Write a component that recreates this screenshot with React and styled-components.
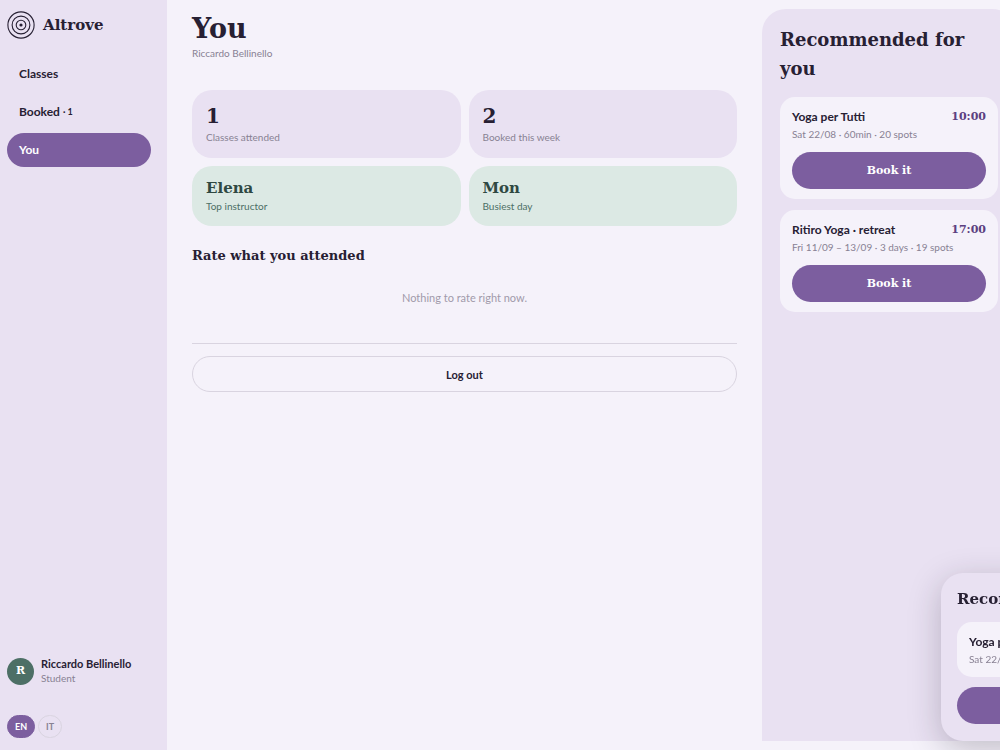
import React from "react";
import styled, { createGlobalStyle, ThemeProvider } from "styled-components";

const theme = {
  paper: "#f5f2fa",
  lilac: "#e9e1f2",
  purple: "#7c5e9f",
  violet: "#5b4080",
  ink: "#272033",
  muted: "#888193",
  line: "#d9d4e0",
  mint: "#dce9e4",
  green: "#4d6f66",
  forest: "#2f4842",
  display: '"DejaVu Serif", serif',
};

const GlobalStyle = createGlobalStyle`
  *, *::before, *::after { box-sizing: border-box; }
  body {
    margin: 0;
    overflow: hidden;
    background: ${theme.paper};
    color: ${theme.ink};
    font-family: Lato, sans-serif;
    font-size: 12px;
    line-height: 16px;
  }
  h1, h2, h3, p { margin: 0; }
  button { font-family: inherit; cursor: pointer; }
`;

const Shell = styled.div`
  display: grid;
  grid-template-columns: 167px minmax(0, 1fr) 238px;
  height: 100vh;
`;

const Sidebar = styled.aside`
  display: flex;
  flex-direction: column;
  padding: 11px 16px 12px 7px;
  background: ${(p) => p.theme.lilac};
`;

const Brand = styled.a`
  display: flex;
  align-items: center;
  gap: 8px;
  color: inherit;
  text-decoration: none;
  font: 700 15px/28px ${(p) => p.theme.display};
`;

const Nav = styled.nav`
  display: flex;
  flex-direction: column;
  gap: 4px;
  margin-top: 18px;
`;

const NavLink = styled.a`
  display: flex;
  align-items: center;
  gap: 3px;
  height: 34px;
  padding: 0 12px;
  border-radius: 17px;
  background: ${(p) => (p.$active ? p.theme.purple : "transparent")};
  color: ${(p) => (p.$active ? "#fff" : p.theme.ink)};
  font-size: 12px;
  font-weight: 700;
  text-decoration: none;
`;

const Count = styled.span`
  font-size: 9px;
`;

const Profile = styled.div`
  display: flex;
  align-items: center;
  gap: 7px;
  margin-top: auto;
`;

const Avatar = styled.span`
  display: grid;
  place-items: center;
  flex: none;
  width: 27px;
  height: 27px;
  border-radius: 50%;
  background: ${(p) => p.theme.green};
  color: #fff;
  font: 700 11px/16px ${(p) => p.theme.display};
`;

const ProfileName = styled.p`
  font-size: 11px;
  font-weight: 700;
  line-height: 15px;
  white-space: nowrap;
`;

const Caption = styled.p`
  color: ${(p) => (p.$green ? p.theme.green : p.theme.muted)};
  font-size: 10px;
  line-height: 15px;
`;

const Languages = styled.div`
  display: flex;
  gap: 3px;
  margin-top: 29px;
`;

const Language = styled.button`
  height: 23px;
  padding: 0 7px;
  border: 1px solid ${(p) => (p.$active ? p.theme.purple : p.theme.line)};
  border-radius: 12px;
  background: ${(p) => (p.$active ? p.theme.purple : "transparent")};
  color: ${(p) => (p.$active ? "#fff" : p.theme.muted)};
  font-size: 9px;
  font-weight: 700;
`;

const Main = styled.main`
  padding: 11px 25px;
`;

const PageTitle = styled.h1`
  font: 700 27px/35px ${(p) => p.theme.display};
`;

const Stats = styled.dl`
  display: grid;
  grid-template-columns: 1fr 1fr;
  gap: 8px;
  margin: 29px 0 0;
`;

const Stat = styled.div`
  display: flex;
  flex-direction: column;
  padding: ${(p) => (p.$green ? "12px 14px" : "13px 14px")};
  height: ${(p) => (p.$green ? "60px" : "68px")};
  border-radius: 20px;
  background: ${(p) => (p.$green ? p.theme.mint : p.theme.lilac)};
`;

const StatValue = styled.dd`
  order: -1;
  margin: 0;
  color: ${(p) => (p.$green ? p.theme.forest : p.theme.ink)};
  font: 700 ${(p) => (p.$green ? "15px/21px" : "20px/27px")} ${(p) => p.theme.display};
`;

const SectionTitle = styled.h2`
  margin-top: 20px;
  font: 700 13px/20px ${(p) => p.theme.display};
`;

const Empty = styled.p`
  padding: 24px 0 37px;
  border-bottom: 1px solid ${(p) => p.theme.line};
  color: #a19aaa;
  font-size: 11px;
  text-align: center;
`;

const LogoutButton = styled.button`
  width: 100%;
  height: 36px;
  margin-top: 12px;
  border: 1px solid ${(p) => p.theme.line};
  border-radius: 18px;
  background: transparent;
  color: ${(p) => p.theme.ink};
  font-size: 11px;
  font-weight: 700;
`;

const Panel = styled.aside`
  display: flex;
  flex-direction: column;
  gap: 11px;
  width: 254px;
  margin: 9px 0;
  padding: 16px 18px;
  border-radius: 24px 24px 0 0;
  background: ${(p) => p.theme.lilac};
`;

const PanelTitle = styled.h2`
  margin-bottom: 3px;
  padding-right: 24px;
  font: 700 18px/29px ${(p) => p.theme.display};
`;

const ClassCard = styled.article`
  padding: 12px 12px 10px;
  border-radius: 15px;
  background: ${(p) => p.theme.paper};
`;

const ClassHeader = styled.header`
  display: flex;
  align-items: center;
  justify-content: space-between;
  white-space: nowrap;
`;

const ClassName = styled.h3`
  font-size: 12px;
  font-weight: 700;
  line-height: 16px;
`;

const ClassTime = styled.time`
  color: ${(p) => p.theme.violet};
  font: 700 11px/16px ${(p) => p.theme.display};
`;

const ClassMeta = styled(Caption)`
  margin-top: 2px;
  white-space: nowrap;
`;

const BookButton = styled.button`
  display: block;
  width: 100%;
  height: 37px;
  margin-top: 10px;
  border: 0;
  border-radius: 19px;
  background: ${(p) => p.theme.purple};
  color: #fff;
  font: 700 11px/16px ${(p) => p.theme.display};
`;

const Floating = styled.section`
  position: fixed;
  bottom: 9px;
  left: calc(100% - 59px);
  width: 300px;
  padding: 16px 16px 17px;
  border-radius: 22px;
  background: ${(p) => p.theme.lilac};
  box-shadow: 0 8px 32px rgba(39, 32, 51, 0.25);
`;

const FloatingTitle = styled.h2`
  margin-bottom: 13px;
  font: 700 15px/20px ${(p) => p.theme.display};
  white-space: nowrap;
`;

function Logo() {
  return (
    <svg width="28" height="28" viewBox="0 0 28 28" fill="none" stroke="#272033" strokeWidth="1.1" aria-hidden="true">
      <circle cx="14" cy="14" r="13.1" />
      <circle cx="14" cy="14" r="8.9" />
      <circle cx="14" cy="14" r="4.8" />
      <circle cx="14" cy="14" r="1.6" fill="#272033" stroke="none" />
    </svg>
  );
}

function ClassInfo({ name, time, meta }) {
  return (
    <>
      <ClassHeader>
        <ClassName>{name}</ClassName>
        <ClassTime>{time}</ClassTime>
      </ClassHeader>
      <ClassMeta>{meta}</ClassMeta>
    </>
  );
}

const stats = [
  { value: "1", label: "Classes attended" },
  { value: "2", label: "Booked this week" },
  { value: "Elena", label: "Top instructor", green: true },
  { value: "Mon", label: "Busiest day", green: true },
];

const classes = [
  { name: "Yoga per Tutti", time: "10:00", meta: "Sat 22/08 · 60min · 20 spots" },
  { name: "Ritiro Yoga · retreat", time: "17:00", meta: "Fri 11/09 – 13/09 · 3 days · 19 spots" },
];

export default function App() {
  return (
    <ThemeProvider theme={theme}>
      <GlobalStyle />
      <Shell>
        <Sidebar>
          <Brand href="#home"><Logo />Altrove</Brand>
          <Nav aria-label="Main">
            <NavLink href="#classes">Classes</NavLink>
            <NavLink href="#booked">Booked <Count>· 1</Count></NavLink>
            <NavLink href="#you" $active aria-current="page">You</NavLink>
          </Nav>
          <Profile>
            <Avatar>R</Avatar>
            <div>
              <ProfileName>Riccardo Bellinello</ProfileName>
              <Caption>Student</Caption>
            </div>
          </Profile>
          <Languages>
            <Language $active>EN</Language>
            <Language>IT</Language>
          </Languages>
        </Sidebar>
        <Main>
          <PageTitle>You</PageTitle>
          <Caption>Riccardo Bellinello</Caption>
          <Stats>
            {stats.map((s) => (
              <Stat key={s.label} $green={s.green}>
                <Caption as="dt" $green={s.green}>{s.label}</Caption>
                <StatValue $green={s.green}>{s.value}</StatValue>
              </Stat>
            ))}
          </Stats>
          <SectionTitle>Rate what you attended</SectionTitle>
          <Empty>Nothing to rate right now.</Empty>
          <LogoutButton>Log out</LogoutButton>
        </Main>
        <Panel>
          <PanelTitle>Recommended for you</PanelTitle>
          {classes.map((c) => (
            <ClassCard key={c.name}>
              <ClassInfo {...c} />
              <BookButton>Book it</BookButton>
            </ClassCard>
          ))}
        </Panel>
      </Shell>
      <Floating>
        <FloatingTitle>Recommended for you</FloatingTitle>
        <ClassCard>
          <ClassInfo {...classes[0]} />
        </ClassCard>
        <BookButton>Book it</BookButton>
      </Floating>
    </ThemeProvider>
  );
}
